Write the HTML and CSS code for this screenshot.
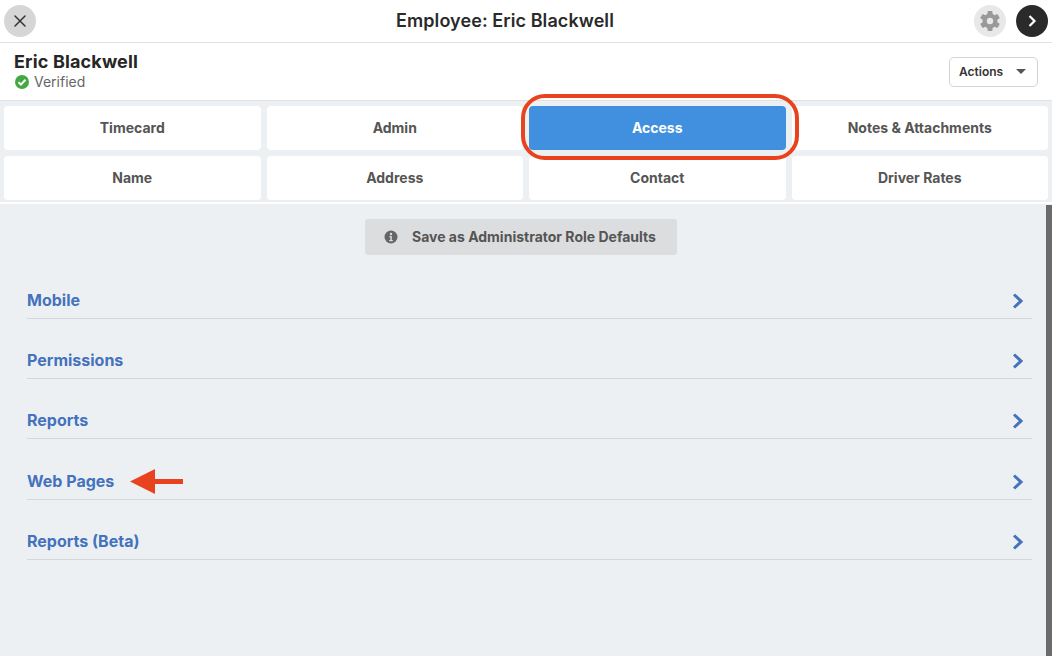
FILE: index.html
```html
<!DOCTYPE html>
<html lang="en">
<head>
<meta charset="utf-8">
<title>Employee: Eric Blackwell</title>
<link rel="stylesheet" href="styles.css">
</head>
<body>
<div class="page">
  <header class="topbar">
    <button class="round close" aria-label="Close">
      <svg width="12" height="12" viewBox="0 0 12 12"><path d="M1 1l10 10M11 1L1 11" stroke="#333" stroke-width="1.5" stroke-linecap="round" fill="none"/></svg>
    </button>
    <h1 class="title">Employee: Eric Blackwell</h1>
    <div class="top-actions">
      <button class="round gear" aria-label="Settings">
        <svg width="22" height="22" viewBox="0 0 22 22"><g fill="#999"><path fill-rule="evenodd" d="M11 3.500a7.500 7.500 0 1 0 0 15 7.500 7.500 0 0 0 0-15zM11 7.800a3.200 3.200 0 1 1 0 6.400 3.200 3.200 0 0 1 0-6.400z"/><rect x="8.500" y="1" width="5" height="4" rx="1"/><rect x="8.500" y="17" width="5" height="4" rx="1"/><rect x="8.500" y="1" width="5" height="4" rx="1" transform="rotate(60 11 11)"/><rect x="8.500" y="1" width="5" height="4" rx="1" transform="rotate(120 11 11)"/><rect x="8.500" y="1" width="5" height="4" rx="1" transform="rotate(240 11 11)"/><rect x="8.500" y="1" width="5" height="4" rx="1" transform="rotate(300 11 11)"/></g></svg>
      </button>
      <button class="round next" aria-label="Next">
        <svg width="10" height="14" viewBox="0 0 10 14"><path d="M2.500 2l5 5-5 5" stroke="#fff" stroke-width="2.200" fill="none"/></svg>
      </button>
    </div>
  </header>
  <section class="person">
    <div>
      <div class="name">Eric Blackwell</div>
      <div class="status">
        <svg width="14" height="14" viewBox="0 0 14 14"><circle cx="7" cy="7" r="7" fill="#43a843"/><path d="M3.500 7.200l2.400 2.400 4.600-4.800" stroke="#fff" stroke-width="2" fill="none"/></svg>
        <span>Verified</span>
      </div>
    </div>
    <button class="actions">Actions <span class="caret"></span></button>
  </section>
  <nav class="tabs">
    <a class="tab">Timecard</a>
    <a class="tab">Admin</a>
    <a class="tab active">Access<span class="ring"></span></a>
    <a class="tab">Notes &amp; Attachments</a>
    <a class="tab">Name</a>
    <a class="tab">Address</a>
    <a class="tab">Contact</a>
    <a class="tab">Driver Rates</a>
  </nav>
  <main class="content">
    <div class="save-row">
      <button class="save">
        <svg width="14" height="14" viewBox="0 0 14 14"><circle cx="7" cy="7" r="6.500" fill="#666"/><circle cx="7" cy="4" r="1.200" fill="#dcdddf"/><path d="M5.500 6h2.300v4h1v1.200H5.300V10h1V7.200h-.8z" fill="#dcdddf"/></svg>
        <span class="save-label">Save as Administrator Role Defaults</span>
      </button>
    </div>
    <ul class="list">
      <li class="row">Mobile<svg class="chev" width="12" height="16" viewBox="0 0 12 16"><path d="M2 1.500L9 8l-7 6.500" stroke="#4472bd" stroke-width="3" fill="none"/></svg></li>
      <li class="row">Permissions<svg class="chev" width="12" height="16" viewBox="0 0 12 16"><path d="M2 1.500L9 8l-7 6.500" stroke="#4472bd" stroke-width="3" fill="none"/></svg></li>
      <li class="row">Reports<svg class="chev" width="12" height="16" viewBox="0 0 12 16"><path d="M2 1.500L9 8l-7 6.500" stroke="#4472bd" stroke-width="3" fill="none"/></svg></li>
      <li class="row">Web Pages
        <svg class="arrow" width="53" height="25" viewBox="0 0 53 25"><path d="M0 12.500L25 0v10h28v5H25v10z" fill="#e8431e"/></svg>
        <svg class="chev" width="12" height="16" viewBox="0 0 12 16"><path d="M2 1.500L9 8l-7 6.500" stroke="#4472bd" stroke-width="3" fill="none"/></svg></li>
      <li class="row">Reports (Beta)<svg class="chev" width="12" height="16" viewBox="0 0 12 16"><path d="M2 1.500L9 8l-7 6.500" stroke="#4472bd" stroke-width="3" fill="none"/></svg></li>
    </ul>
    <div class="scrollbar"></div>
  </main>
</div>
</body>
</html>
```

FILE: styles.css
```css
* { box-sizing: border-box; }
html, body { margin: 0; height: 100%; }
body { font-family: Inter, "Liberation Sans", sans-serif; background: #fff; overflow: hidden; }
.page { width: 1052px; height: 656px; display: flex; flex-direction: column; }
button { font-family: inherit; border: 0; padding: 0; }
.topbar { height: 43px; flex: none; display: flex; align-items: center; justify-content: space-between; padding: 0 4px 1px; border-bottom: 1px solid #e2e2e2; position: relative; }
.title { position: absolute; left: 0; right: 42px; top: 10px; margin: 0; text-align: center; font-size: 18px; line-height: 22px; font-weight: 600; letter-spacing: .08px; color: #2a2a2a; pointer-events: none; }
.round { width: 32px; height: 32px; border-radius: 50%; display: flex; align-items: center; justify-content: center; }
.close { background: #d6d6d6; }
.top-actions { display: flex; gap: 10px; }
.gear { background: #e8e8e8; }
.next { background: #2a2a2a; }
.person { height: 58px; flex: none; display: flex; justify-content: space-between; align-items: center; padding: 0 14px; border-bottom: 1px solid #e2e2e2; }
.person > div { margin-bottom: 2px; }
.name { font-size: 18px; line-height: 22px; font-weight: 700; letter-spacing: .15px; color: #262626; }
.status { display: flex; align-items: center; gap: 5px; margin-left: 1px; font-size: 14px; line-height: 18px; color: #666; }
.actions { width: 89px; height: 30px; background: #fff; border: 1px solid #d4d4d4; border-radius: 5px; font-size: 12px; font-weight: 600; color: #333; display: flex; align-items: center; justify-content: space-between; padding: 0 11px 0 9px; }
.caret { width: 0; height: 0; border-left: 5px solid transparent; border-right: 5px solid transparent; border-top: 5px solid #555; }
.tabs { flex: none; height: 101px; background: #edf0f3; display: grid; grid-template-columns: repeat(4, 1fr); grid-template-rows: 44px 44px; gap: 6px; padding: 5px 4px 2px; }
.tab { position: relative; background: #fff; border-radius: 4px; display: flex; align-items: center; justify-content: center; padding-bottom: 2px; font-size: 14px; font-weight: 700; color: #555; }
.tab.active { background: #418fdf; color: #fff; z-index: 1; }
.ring { position: absolute; left: -8px; right: -13px; top: -12px; bottom: -10px; border: 4px solid #e8431e; border-radius: 24px; pointer-events: none; }
.content { position: relative; flex: 1; background: #edf0f3; padding: 15px 20px 0 27px; border-top: 2px solid #fff; }
.save-row { display: flex; justify-content: center; margin: 0 -10px 0 -27px; }
.save { width: 312px; height: 36px; background: #dcdddf; border-radius: 3px; color: #555; font-size: 14px; font-weight: 700; display: flex; align-items: center; gap: 14px; padding-left: 19px; }
.save-label { margin-bottom: 2px; }
.list { list-style: none; margin: 27.500px 0 0; padding: 0; }
.row { position: relative; height: 60.400px; display: flex; align-items: flex-end; padding-bottom: 8px; border-bottom: 1px solid #d3d7db; font-size: 16px; line-height: 19px; font-weight: 700; color: #4472bd; }
.row:first-child { height: 36px; }
.chev { position: absolute; right: 8px; bottom: 9px; }
.arrow { position: absolute; left: 103px; bottom: 5px; }
.scrollbar { position: absolute; right: 0; top: 1px; bottom: 0; width: 6px; background: #6b6b6b; }
```
